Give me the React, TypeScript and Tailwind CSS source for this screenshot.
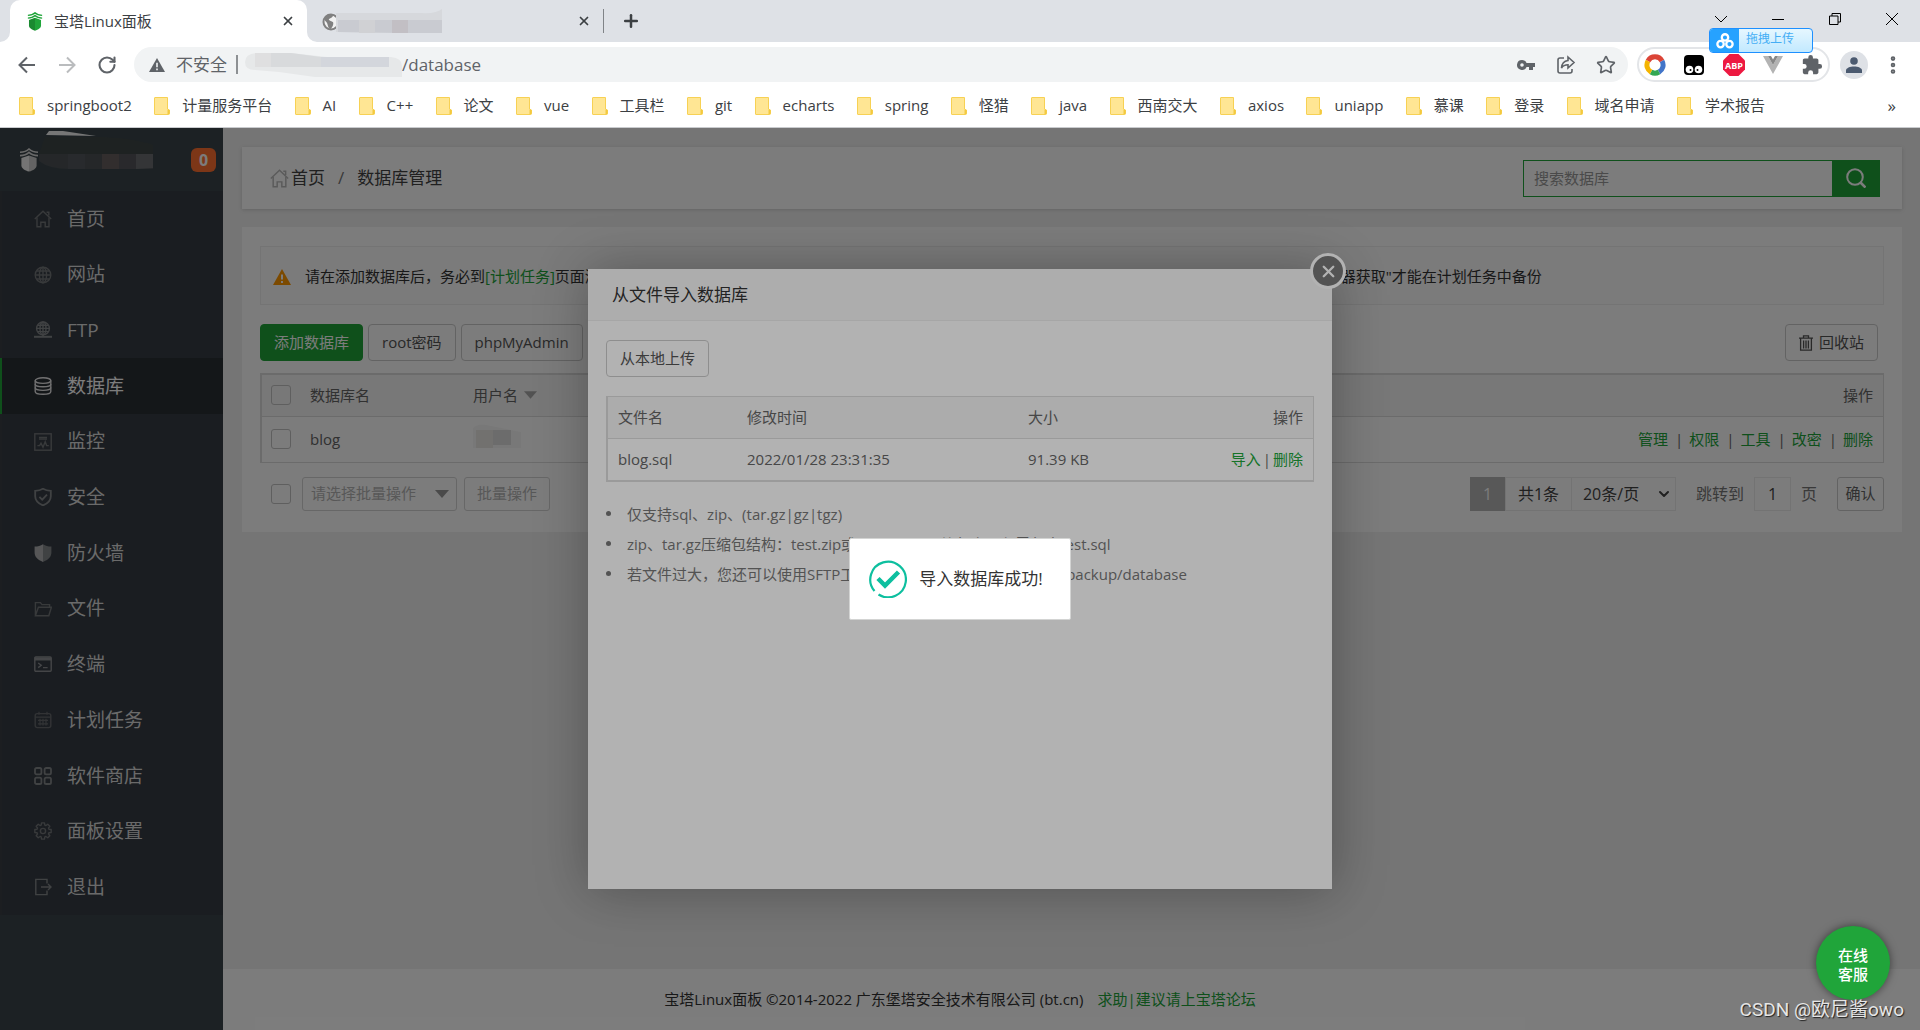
import { useState, type ReactNode } from "react";
import { ChevronDown, MoreVertical, Plus, RotateCw, Star, X } from "lucide-react";

const bookmarks = [
  "springboot2", "计量服务平台", "AI", "C++", "论文", "vue", "工具栏", "git", "echarts", "spring",
  "怪猎", "java", "西南交大", "axios", "uniapp", "慕课", "登录", "域名申请", "学术报告",
];

function Icon({ children, className = "h-[18px] w-[18px]" }: { children: ReactNode; className?: string }) {
  return (
    <svg viewBox="0 0 18 18" fill="none" stroke="currentColor" strokeWidth="1.4" className={className} aria-hidden="true">
      {children}
    </svg>
  );
}

const homeShape = (
  <>
    <path d="M.8 9 9 1.2 17.2 9" />
    <path d="M3 7.6v9.2h3.8v-4.6h4.4v4.6H15V7.6M12.6 2.2h2.2v3.4" />
  </>
);

const globeLines = (
  <>
    <ellipse cx="9" cy="9" rx="3.6" ry="7.8" />
    <path d="M9 1.2v15.6M1.2 9h15.6M2.4 5h13.2M2.4 13h13.2" />
  </>
);

// outline of a gear with eight teeth, centred in the 18x18 box
const gearPoints = Array.from({ length: 8 }, (_, i) => i * 45)
  .flatMap((a) => [[a - 17, 6.2], [a - 10, 8.3], [a + 10, 8.3], [a + 17, 6.2]])
  .map(([deg, r]) => {
    const rad = (deg * Math.PI) / 180;
    return `${(9 + r * Math.cos(rad)).toFixed(2)},${(9 + r * Math.sin(rad)).toFixed(2)}`;
  })
  .join(" ");

type MenuItem = { label: string; tone: string; icon: ReactNode };

const menu: MenuItem[] = [
  { label: "首页", tone: "text-[#74777a]", icon: homeShape },
  { label: "网站", tone: "text-[#74777a]", icon: <><circle cx="9" cy="9" r="7.8" />{globeLines}</> },
  {
    label: "FTP",
    tone: "text-[#85888b]",
    icon: (
      <>
        <circle cx="9" cy="7.4" r="6.4" />
        <ellipse cx="9" cy="7.4" rx="3" ry="6.4" />
        <path d="M9 1v15M2.6 7.4h12.8M3.6 4.2h10.8M3.6 10.6h10.8" />
        <path d="M0 15.8h18" strokeWidth="2" />
      </>
    ),
  },
  {
    label: "数据库",
    tone: "text-[#e8e8e8]",
    icon: (
      <>
        <ellipse cx="9" cy="3.6" rx="7.8" ry="2.8" />
        <path d="M1.2 3.6v10.8c0 1.6 3.4 2.8 7.8 2.8s7.8-1.2 7.8-2.8V3.6" />
        <path d="M1.2 7c0 1.6 3.4 2.8 7.8 2.8s7.8-1.2 7.8-2.8M1.2 10.6c0 1.6 3.4 2.8 7.8 2.8s7.8-1.2 7.8-2.8" />
      </>
    ),
  },
  {
    label: "监控",
    tone: "text-[#74777a]",
    icon: (
      <>
        <rect x=".8" y=".8" width="16.4" height="16.4" />
        <path d="M5 4.4h8M5 6h8M3.4 12.6h2.2l1.4-2.4 2 4 2.2-5.4 1.4 3.8h2.2" />
      </>
    ),
  },
  {
    label: "安全",
    tone: "text-[#85888b]",
    icon: (
      <>
        <path d="M9 .8c2.4 1.4 5 2 7.8 2v5.4c0 4.2-3 7.2-7.8 9.2-4.8-2-7.8-5-7.8-9.2V2.8c2.8 0 5.4-.6 7.8-2Z" strokeWidth="1.8" />
        <path d="m5.4 8.8 2.8 2.8 4.8-5" strokeWidth="1.8" />
      </>
    ),
  },
  {
    label: "防火墙",
    tone: "text-[#b0b2b4]",
    icon: (
      <>
        <path d="M9 .2C6.600 1.800 4 2.400.6 2.600v6c0 4.400 3.200 7.400 8.400 9.400Z" fill="currentColor" stroke="none" />
        <path d="M9 .2c2.400 1.600 5 2.200 8.400 2.400v6c0 4.400-3.200 7.400-8.400 9.400Z" fill="#85888b" stroke="none" />
      </>
    ),
  },
  {
    label: "文件",
    tone: "text-[#74777a]",
    icon: <path d="M1.4 15.8V2.6h5l1.6 2h7.6v2.6M1.4 15.8 4.4 7.2h13l-2.6 8.6H1.4Z" />,
  },
  {
    label: "终端",
    tone: "text-[#8d9093]",
    icon: (
      <>
        <rect x=".8" y="2" width="16.4" height="14.2" rx="1" />
        <path d="M.8 4h16.4" strokeWidth="3" />
        <path d="m4.2 8 3 2.2-3 2.4M9 12.6h4.6" />
      </>
    ),
  },
  {
    label: "计划任务",
    tone: "text-[#686b6e]",
    icon: (
      <>
        <rect x="1.2" y="2.6" width="15.6" height="14" rx="2" />
        <path d="M5 .8v3M13 .8v3M1.2 6.2h15.6M4 9.4h10M4 12.8h10M6 7.8v6.6M9 7.8v6.6M12 7.8v6.6" strokeWidth="1.2" />
      </>
    ),
  },
  {
    label: "软件商店",
    tone: "text-[#85888b]",
    icon: (
      <g strokeWidth="1.8">
        <rect x="1" y="1" width="6.4" height="6.4" rx="1.6" />
        <rect x="10.6" y="1" width="6.4" height="6.4" rx="1.6" />
        <rect x="1" y="10.6" width="6.4" height="6.4" rx="1.6" />
        <rect x="10.6" y="10.6" width="6.4" height="6.4" rx="1.6" />
      </g>
    ),
  },
  {
    label: "面板设置",
    tone: "text-[#74777a]",
    icon: (
      <>
        <polygon points={gearPoints} strokeLinejoin="round" />
        <circle cx="9" cy="9" r="2.6" />
      </>
    ),
  },
  {
    label: "退出",
    tone: "text-[#85888b]",
    icon: <path d="M13 5.4V1.4H1.800v15.200H13v-4M7 9h10M14 6l3 3-3 3" />,
  },
];

function PagodaLogo({ className, roof, left, right }: { className: string; roof: string; left: string; right: string }) {
  return (
    <svg viewBox="0 0 20 24" className={className} aria-hidden="true">
      <path d="M1 4.2C5 4.2 8 3 10 1c2 2 5 3.2 9 3.2M1 7.6c4 0 7-1.2 9-3.2 2 2 5 3.2 9 3.2" fill="none" stroke={roof} strokeWidth="1.6" />
      <path d="M10 7.4 2.4 10v7.4c0 2.6 3.4 5 7.6 6.2Z" fill={left} />
      <path d="m10 7.4 7.6 2.6v7.4c0 2.6-3.4 5-7.6 6.2Z" fill={right} />
    </svg>
  );
}

function FolderIcon() {
  return (
    <svg viewBox="0 0 16 18" className="h-[18px] w-4 shrink-0" aria-hidden="true">
      <path d="M1 .5h12.500v11.500l2 1v3.500a1 1 0 0 1-1 1H1a.5.5 0 0 1-.5-.5V1A.5.5 0 0 1 1 .5Z" fill="#ffe694" stroke="#f7d154" />
      <path d="M13.500 17.500v-5l2 .8v3.700Z" fill="#f3c93f" />
    </svg>
  );
}

function WindowButtons() {
  return (
    <div className="flex items-center gap-[45px] pb-1 pr-[22px] text-black">
      {[
        ["搜索标签页", "M0 3l6 6 6-6"],
        ["最小化", "M0 6.5h12"],
        ["还原", "M.5 3h8.500v8.500H.5zM3 3V.5h8.500V9H9"],
        ["关闭", "M0 0l12 12M12 0 0 12"],
      ].map(([label, d]) => (
        <button key={label} aria-label={label} type="button">
          <svg viewBox="0 0 12 12" className="h-3 w-3" fill="none" stroke="currentColor">
            <path d={d} />
          </svg>
        </button>
      ))}
    </div>
  );
}

function TabStrip() {
  return (
    <div className="flex h-[42px] bg-[#dee1e6] text-[15px] text-[#3c4043]">
      <div className="relative ml-[10px] flex w-[297px] items-center rounded-t-[10px] bg-white pl-4 pr-3">
        <svg viewBox="0 0 10 10" className="absolute -left-[10px] bottom-0 h-[10px] w-[10px]" aria-hidden="true">
          <path d="M10 0v10H0A10 10 0 0 0 10 0Z" fill="#fff" />
        </svg>
        <svg viewBox="0 0 10 10" className="absolute -right-[10px] bottom-0 h-[10px] w-[10px]" aria-hidden="true">
          <path d="M0 0v10h10A10 10 0 0 1 0 0Z" fill="#fff" />
        </svg>
        <PagodaLogo className="h-[19px] w-[18px]" roof="#20a53a" left="#1a8a30" right="#20a53a" />
        <span className="ml-[10px] flex-1">宝塔Linux面板</span>
        <button type="button" aria-label="关闭标签页"><X className="h-[14px] w-[14px]" strokeWidth={3} /></button>
      </div>
      <div className="flex w-[296px] items-center pl-[15px] pr-3">
        <svg viewBox="0 0 122 26" className="h-[26px] w-[122px]" aria-hidden="true">
          <circle cx="9" cy="14" r="7.500" fill="#f1f1f1" stroke="#808080" strokeWidth="2" />
          <path d="M3 10c3-4 6-4 8-3 0 3-3 3-4 4s2 2 4 3c1 3-1 5-2 7-3 0-3-4-4-6s-3-2-2-5Z" fill="#808080" />
          <path d="M14 5h85q15 1 21-4v24H80L14 24Z" fill="#d6d8dc" />
          <path d="M16 12h104v13H80L16 24Z" fill="#c9cbd1" />
          <path d="M70 12h16v13H70z" fill="#c2bfc4" />
          <path d="M37 12h16v13H37z" fill="#d0d1d4" />
        </svg>
        <button type="button" aria-label="关闭标签页" className="ml-auto"><X className="h-[14px] w-[14px]" strokeWidth={3} /></button>
      </div>
      <div className="my-auto h-6 w-px bg-[#808387]" />
      <button type="button" aria-label="新标签页" className="ml-[17px]"><Plus className="h-5 w-5" strokeWidth={3} /></button>
      <div className="ml-auto flex items-center"><WindowButtons /></div>
    </div>
  );
}

function Extensions() {
  return (
    <div className="flex h-[35px] w-[193px] items-center justify-between rounded-full border-2 border-[#e3e5e8] px-[5px]">
      <svg viewBox="0 0 22 22" className="h-[22px] w-[22px]" fill="none" strokeWidth="5" aria-hidden="true">
        <path d="M4 7a8 8 0 0 1 14 0" stroke="#db4437" />
        <path d="M18 7a8 8 0 0 1-3 11" stroke="#4275c9" />
        <path d="M15 18a8 8 0 0 1-8 0" stroke="#34a853" />
        <path d="M7 18A8 8 0 0 1 4 7" stroke="#f4b400" />
      </svg>
      <svg viewBox="0 0 20 20" className="h-5 w-5" aria-hidden="true">
        <rect width="20" height="20" rx="4" fill="#000" />
        <circle cx="5.500" cy="14.500" r="3.800" fill="#fff" />
        <circle cx="14.500" cy="14.500" r="3.800" fill="#fff" />
        <circle cx="6.500" cy="15" r="1" fill="#000" />
        <circle cx="13.500" cy="15" r="1" fill="#000" />
      </svg>
      <svg viewBox="0 0 22 22" className="h-[22px] w-[22px]" aria-hidden="true">
        <path d="M6.500 0h9L22 6.500v9L15.500 22h-9L0 15.500v-9Z" fill="#ed1941" />
        <text x="11" y="14.500" textAnchor="middle" fontSize="9" fontWeight="700" fill="#fff" className="font-['Open_Sans',sans-serif]">ABP</text>
      </svg>
      <svg viewBox="0 0 20 18" className="h-[18px] w-5" aria-hidden="true">
        <path d="M0 0h5l5 9 5-9h5L10 18Z" fill="#b3b3b3" />
        <path d="M5 0h3l2 3.500L12 0h3l-5 9Z" fill="#878787" />
      </svg>
      <svg viewBox="0 0 24 24" className="h-[22px] w-[22px]" fill="#5f6368" aria-hidden="true">
        <path d="M20.500 11H19V7c0-1.100-.9-2-2-2h-4V3.500a2.500 2.500 0 0 0-5 0V5H4c-1.100 0-2 .9-2 2v3.800h1.500a2.700 2.700 0 0 1 0 5.400H2V20c0 1.100.9 2 2 2h3.800v-1.500a2.700 2.700 0 0 1 5.400 0V22H17c1.100 0 2-.9 2-2v-4h1.500a2.500 2.500 0 0 0 0-5Z" />
      </svg>
    </div>
  );
}

function AddressBar() {
  const [path, setPath] = useState("/database");

  return (
    <div className="flex h-[45px] items-center bg-white pl-[17px] pr-4 text-[#5f6368]">
      <div className="flex w-[117px] items-center gap-5">
        <button type="button" aria-label="后退">
          <svg viewBox="0 0 20 20" className="h-5 w-5" fill="none" stroke="#5f6368" strokeWidth="2"><path d="M18 10H3M10 2.500 2.500 10l7.500 7.500" /></svg>
        </button>
        <button type="button" aria-label="前进">
          <svg viewBox="0 0 20 20" className="h-5 w-5" fill="none" stroke="#babcbe" strokeWidth="2"><path d="M2 10h15M10 2.500l7.500 7.500-7.500 7.500" /></svg>
        </button>
        <button type="button" aria-label="重新加载"><RotateCw className="h-5 w-5" strokeWidth={2.5} /></button>
      </div>
      <div className="flex h-[35px] flex-1 items-center rounded-full bg-[#f1f3f4] pl-[15px] pr-3 text-[17px]">
        <svg viewBox="0 0 16 14" className="h-[14px] w-4" aria-hidden="true">
          <path d="M8 0 16 14H0Z" fill="#5f6368" />
          <path d="M8 4.800v4.400M8 10.400v1.800" stroke="#f1f3f4" strokeWidth="1.600" />
        </svg>
        <span className="ml-[11px]">不安全</span>
        <span className="ml-[9px] h-[19px] w-[2px] bg-[#8d9093]" />
        <svg viewBox="0 0 157 26" className="ml-[7px] h-[26px] w-[157px]" aria-hidden="true">
          <path d="M12 1h34l36 4h64q11 1 11 9v11H70L34 20 10 18Q0 18 0 10T12 1Z" fill="#e6e8e9" />
          <path d="M10 1h36l30 4v10H10Z" fill="#d8dadc" />
          <path d="M76 5h68v10H76z" fill="#d3d6dc" />
          <path d="M10 1h16v14H10z" fill="#dfdfe0" />
        </svg>
        <input
          type="text"
          aria-label="地址"
          value={path}
          onChange={(e) => setPath(e.target.value)}
          className="min-w-0 flex-1 bg-transparent outline-none"
        />
        <div className="flex items-center gap-5">
          <button type="button" aria-label="密码">
            <svg viewBox="0 0 20 20" className="h-5 w-5" fill="#5f6368">
              <path fillRule="evenodd" d="M6 5a5 5 0 1 0 4.600 7H13v3h4v-3h2V8h-8.400A5 5 0 0 0 6 5Zm0 3.200a1.800 1.800 0 1 1 0 3.600 1.800 1.800 0 0 1 0-3.600Z" />
            </svg>
          </button>
          <button type="button" aria-label="分享">
            <svg viewBox="0 0 20 20" className="h-5 w-5" fill="none" stroke="#5f6368" strokeWidth="1.600">
              <path d="M8 3H4a2 2 0 0 0-2 2v11a2 2 0 0 0 2 2h10a2 2 0 0 0 2-2v-2" />
              <path d="M12 2l6 5.500-6 5.500v-3.200c-3 0-5 .8-6.500 3.200.3-4 2.500-7 6.500-7.500Z" />
            </svg>
          </button>
          <button type="button" aria-label="收藏"><Star className="h-5 w-5" strokeWidth={2} /></button>
        </div>
      </div>
      <div className="ml-[9px]"><Extensions /></div>
      <button type="button" aria-label="个人资料" className="ml-[10px] flex h-7 w-7 items-center justify-center rounded-full bg-[#dee1e6]">
        <svg viewBox="0 0 16 16" className="h-4 w-4" fill="#4b5a70">
          <circle cx="8" cy="4" r="3.800" />
          <path d="M0 16v-2.500C0 11 4 9.500 8 9.500s8 1.500 8 4V16Z" />
        </svg>
      </button>
      <button type="button" aria-label="更多" className="ml-[14px]"><MoreVertical className="h-[22px] w-[22px]" strokeWidth={3} /></button>
    </div>
  );
}

function Browser() {
  return (
    <header className="relative">
      <TabStrip />
      <AddressBar />
      <nav className="flex h-[41px] items-center justify-between border-b border-[#c9cbce] bg-white pb-[3px] pl-[19px] pr-6 text-[15px] text-[#3c4043]">
        <div className="flex max-w-[1746px] flex-1 items-center justify-between">
          {bookmarks.map((name) => (
            <a key={name} href="#" className="flex items-center gap-3 whitespace-nowrap">
              <FolderIcon />
              {name}
            </a>
          ))}
        </div>
        <button type="button" className="text-[17px]">»</button>
      </nav>
      {/* desktop upload widget floating over the window */}
      <div className="absolute right-[107px] top-7 flex h-[25px] w-[104px] overflow-hidden rounded border border-[#1e90ff] bg-linear-to-b from-[#e6f7ff] to-[#c2e9ff]">
        <div className="flex w-[29px] items-center justify-center bg-[#26a2ff]">
          <svg viewBox="0 0 20 18" className="h-4 w-[18px]" fill="none" stroke="#fff" strokeWidth="2.600" aria-hidden="true">
            <circle cx="10" cy="5" r="3.600" />
            <circle cx="5" cy="12.500" r="3.600" />
            <circle cx="15" cy="12.500" r="3.600" />
          </svg>
        </div>
        <span className="pl-[7px] text-xs leading-5 text-[#45aef5]">拖拽上传</span>
      </div>
    </header>
  );
}

function Sidebar() {
  return (
    <aside className="w-[223px] shrink-0 bg-[#3c464b]">
      <div className="flex h-[63px] items-center pl-[19px] pr-[7px]">
        <PagodaLogo className="h-6 w-5" roof="#d8d8d8" left="#efefef" right="#cfcfcf" />
        <svg viewBox="0 0 116 44" className="h-11 w-[116px] self-start" aria-hidden="true">
          <path d="M7 7 10 3h14l33 5Z" fill="#f4f4f4" />
          <path d="M6 9h52q36 1 56 8v9H0Z" fill="#3f4848" />
          <path d="M0 26h114v15h-4H30Q10 41 0 33Z" fill="#4c5257" />
          <path d="M29 26h17v15H29z" fill="#53585d" />
          <path d="M63 26h17v15H63z" fill="#67605f" />
          <path d="M80 26h17v15H80z" fill="#55565c" />
          <path d="M97 26h17v14l-17 1z" fill="#6c6f72" />
        </svg>
        <span className="ml-auto flex h-6 w-[25px] items-center justify-center rounded-md bg-[#ff7030] text-base font-bold text-white">0</span>
      </div>
      <nav className="grid h-[724px] auto-rows-fr bg-[#373d45] text-[19px]">
        {menu.map((item) => (
          <a
            key={item.label}
            href="#"
            className={
              item.label === "数据库"
                ? "flex items-center gap-[15px] border-l-2 border-[#20a53a] bg-[#2c3036] pl-8 text-white"
                : "flex items-center gap-[15px] border-l-2 border-[#3c4046] pl-8 text-[#dcdcdc]"
            }
          >
            <span className={item.tone}><Icon>{item.icon}</Icon></span>
            {item.label}
          </a>
        ))}
      </nav>
    </aside>
  );
}

function Button({ children, className = "" }: { children: ReactNode; className?: string }) {
  return (
    <button
      type="button"
      className={`flex h-[37px] items-center whitespace-nowrap rounded border px-[13px] ${className || "border-[#ccc] text-[#555]"}`}
    >
      {children}
    </button>
  );
}

function CheckBox({ label }: { label: string }) {
  return <input type="checkbox" aria-label={label} className="block h-5 w-5 shrink-0 appearance-none rounded-[3px] border border-[#c4c4c4]" />;
}

function Caret({ className }: { className: string }) {
  return (
    <svg viewBox="0 0 14 8" className={className} fill="currentColor" aria-hidden="true">
      <path d="M0 0h14L7 8Z" />
    </svg>
  );
}

function DatabaseTable() {
  return (
    <table className="mt-3 w-full border border-l-2 border-t-2 border-[#ddd] text-left text-[#666]">
      <thead className="bg-[#f6f6f6]">
        <tr className="h-[42px] border-b border-[#ddd]">
          <th className="w-[49px] pl-[9px]"><CheckBox label="全选" /></th>
          <th className="w-[163px] font-normal">数据库名</th>
          <th className="font-normal">
            <span className="flex items-center gap-[6px]">用户名<Caret className="h-2 w-[13px] text-[#aaa]" /></span>
          </th>
          <th className="pr-[10px] text-right font-normal">操作</th>
        </tr>
      </thead>
      <tbody>
        <tr className="h-[46px]">
          <td className="pl-[9px]"><CheckBox label="选择 blog" /></td>
          <td>blog</td>
          <td>
            <svg viewBox="0 0 68 30" className="h-[30px] w-[68px]" aria-hidden="true">
              <path d="M0 4Q6-2 18 2l30 6v16H0Z" fill="#f8f8f8" />
              <path d="M3 6h17v18H3z" fill="#ebeae6" />
              <path d="M20 6h18v15H20z" fill="#dfdfdf" />
            </svg>
          </td>
          <td className="pr-[10px] text-right">
            {["管理", "权限", "工具", "改密", "删除"].map((action, i) => (
              <span key={action}>
                {i > 0 && <span className="ml-[7px] mr-[6px]">|</span>}
                <a href="#" className="text-[#20a53a]">{action}</a>
              </span>
            ))}
          </td>
        </tr>
      </tbody>
    </table>
  );
}

function Pager() {
  return (
    <div className="flex h-[34px] items-center text-base text-[#444]">
      <span className="flex h-full w-[35px] items-center justify-center bg-[#b5b5b5] text-white">1</span>
      <span className="flex h-full w-[67px] items-center justify-center border border-[#ececec]">共1条</span>
      <div className="relative h-full">
        <select aria-label="每页条数" className="h-full w-[104px] appearance-none border border-l-0 border-[#ececec] pl-[11px]">
          <option>20条/页</option>
        </select>
        <ChevronDown className="absolute right-1 top-[9px] h-4 w-4" strokeWidth={3} />
      </div>
      <label htmlFor="page" className="ml-5 text-[#777]">跳转到</label>
      <input id="page" defaultValue="1" className="mx-[10px] h-full w-[37px] border border-[#ececec] text-center" />
      <span className="text-[#777]">页</span>
      <button type="button" className="ml-5 h-full w-[47px] rounded-[3px] border border-[#ccc] text-[15px] text-[#666]">确认</button>
    </div>
  );
}

function DatabasePage() {
  return (
    <main className="flex min-w-0 flex-1 flex-col bg-[#f1f1f1] text-[15px]">
      <div className="pb-10 pl-[19px] pr-[18px] pt-[19px]">
        <div className="flex h-[62px] items-center bg-white pl-7 pr-[22px] shadow-[0_1px_4px_rgba(0,0,0,0.15)]">
          <nav className="flex items-center text-[17px] text-[#444]">
            <Icon className="mr-[2px] h-[19px] w-[19px] text-[#bbb]">{homeShape}</Icon>
            <a href="#">首页</a>
            <span className="mx-[13px] text-[#777]">/</span>
            <span>数据库管理</span>
          </nav>
          <form className="ml-auto flex h-[37px]">
            <input
              type="text"
              aria-label="搜索数据库"
              placeholder="搜索数据库"
              className="w-[309px] border border-r-0 border-[#20a53a] px-[10px] outline-none placeholder:text-[#999]"
            />
            <button type="button" aria-label="搜索" className="flex w-12 items-center justify-center bg-[#20a53a] text-white">
              <svg viewBox="0 0 20 20" className="h-5 w-5" fill="none" stroke="currentColor" strokeWidth="2">
                <circle cx="9" cy="9" r="7.800" />
                <path d="m14.500 14.500 5 5" strokeWidth="2.600" />
              </svg>
            </button>
          </form>
        </div>

        <section className="mt-[18px] bg-white px-[18px] pb-[21px] pt-[19px]">
          <div className="flex h-[59px] items-center overflow-hidden whitespace-nowrap border border-[#eee] bg-[#fcfcfc] px-3 pt-[2px] text-[#333]">
            <svg viewBox="0 0 18 16" className="mr-[14px] h-4 w-[18px] shrink-0" aria-hidden="true">
              <path d="M9 0 18 16H0Z" fill="#ff9900" />
              <path d="M9 5.500v5M9 12v2" stroke="#fff" strokeWidth="2" />
            </svg>
            <p>
              请在添加数据库后，务必到<a href="#" className="text-[#20a53a]">[计划任务]</a>
              页面添加定时备份任务，以保证您的数据安全。注意：若某一个数据库不是在当前面板上创建的，则需要先点击"从服务器获取"才能在计划任务中备份
            </p>
          </div>

          <div className="mt-[19px] flex gap-[5px] pr-[6px]">
            <Button className="border-[#20a53a] bg-[#20a53a] text-white">添加数据库</Button>
            <Button>root密码</Button>
            <Button>phpMyAdmin</Button>
            <Button className="ml-auto gap-[6px] border-[#ccc] text-[#555]">
              <svg viewBox="0 0 14 16" className="h-4 w-[14px]" fill="none" stroke="currentColor" strokeWidth="1.300" aria-hidden="true">
                <path d="M0 3.200h14M4.500 3V.8h5V3M1.600 3.200v12h10.800v-12M4.600 5.500v8M7 5.500v8M9.400 5.500v8" />
              </svg>
              回收站
            </Button>
          </div>

          <DatabaseTable />

          <div className="mt-[14px] flex items-center pl-[11px]">
            <CheckBox label="全部选择" />
            <div className="relative ml-[11px] text-[#b5b5b5]">
              <select aria-label="批量操作" className="block h-[34px] w-[155px] appearance-none rounded-[3px] border border-[#d5d5d5] pl-2">
                <option>请选择批量操作</option>
              </select>
              <Caret className="absolute right-2 top-[13px] h-2 w-[14px] text-[#999]" />
            </div>
            <button type="button" className="ml-[7px] h-[34px] w-[86px] rounded-[3px] border border-[#d5d5d5] text-[#b5b5b5]">批量操作</button>
            <div className="ml-auto"><Pager /></div>
          </div>
        </section>
      </div>

      <footer className="mt-auto flex h-[61px] items-center justify-center gap-[14px] bg-white pr-[223px] text-[#333]">
        <span>宝塔Linux面板 ©2014-2022 广东堡塔安全技术有限公司 (bt.cn)</span>
        <a href="#" className="text-[#20a53a]">求助|建议请上宝塔论坛</a>
      </footer>
    </main>
  );
}

const importTips = [
  "仅支持sql、zip、(tar.gz|gz|tgz)",
  "zip、tar.gz压缩包结构：test.zip或test.tar.gz压缩包内，必需包含test.sql",
  "若文件过大，您还可以使用SFTP工具，将数据库文件上传到/www/backup/database",
];

function ImportDialog() {
  return (
    <div role="dialog" aria-labelledby="import-title" className="relative h-[620px] w-[744px] bg-white text-[15px] text-[#666] shadow-[1px_1px_50px_rgba(0,0,0,0.3)]">
      <h2 id="import-title" className="flex h-[52px] items-center border-b border-[#eee] bg-[#f8f8f8] pl-6 text-[17px] text-[#333]">
        从文件导入数据库
      </h2>
      <button type="button" aria-label="关闭" className="absolute -right-[14px] -top-4 flex h-9 w-9 items-center justify-center rounded-full border-[3px] border-white bg-[#777] text-white">
        <X className="h-[19px] w-[19px]" strokeWidth={3} />
      </button>
      <div className="px-[18px] pt-[19px]">
        <Button>从本地上传</Button>
        <table className="mt-[19px] w-full border border-b-2 border-l-2 border-[#ddd] text-left">
          <thead className="bg-[#f6f6f6]">
            <tr className="h-[42px] border-b border-[#ddd]">
              <th className="w-[140px] pl-[10px] font-normal">文件名</th>
              <th className="w-[281px] font-normal">修改时间</th>
              <th className="font-normal">大小</th>
              <th className="pr-[10px] text-right font-normal">操作</th>
            </tr>
          </thead>
          <tbody>
            <tr className="h-[42px]">
              <td className="pl-[10px]">blog.sql</td>
              <td>2022/01/28 23:31:35</td>
              <td>91.39 KB</td>
              <td className="pr-[10px] text-right">
                <a href="#" className="text-[#20a53a]">导入</a>
                <span className="mx-[2px]">|</span>
                <a href="#" className="text-[#20a53a]">删除</a>
              </td>
            </tr>
          </tbody>
        </table>
        <ul className="mt-[17px] leading-[30px] text-[#777]">
          {importTips.map((tip) => (
            <li key={tip} className="flex items-center gap-4 before:h-[5px] before:w-[5px] before:rounded-full before:bg-current">
              {tip}
            </li>
          ))}
        </ul>
      </div>
    </div>
  );
}

function Toast() {
  return (
    <div role="status" className="flex h-[82px] items-center gap-3 rounded-[2px] border border-[#d3d4d3] bg-white pl-[19px] pr-[27px] text-[17px] text-[#333]">
      <svg viewBox="0 0 38 38" className="h-[38px] w-[38px]" fill="none" stroke="#0dbf9f" aria-hidden="true">
        <path d="M9.500 34.500a17.800 17.800 0 1 0-4-3.500" strokeWidth="2.200" />
        <path d="m9 18.500 7 7L29.500 12" strokeWidth="4.500" />
      </svg>
      导入数据库成功!
    </div>
  );
}

export default function App() {
  return (
    <div className="flex min-h-screen flex-col font-['Open_Sans','Noto_Sans_CJK_SC',sans-serif]">
      <Browser />
      <div className="relative flex flex-1">
        <Sidebar />
        <DatabasePage />
        <div className="absolute inset-0 flex items-center justify-center bg-black/30">
          <ImportDialog />
        </div>
        <div className="absolute inset-0 flex items-center justify-center bg-black/30">
          <Toast />
        </div>
        <button type="button" className="absolute bottom-[30px] right-[30px] h-[74px] w-[74px] rounded-full bg-[#20a53a] pt-[3px] text-[15px] font-medium leading-[19px] text-white shadow-[0_0_8px_rgba(0,0,0,0.5)]">
          在线<br />客服
        </button>
        <span className="absolute bottom-2 right-4 font-['Roboto','Noto_Sans_CJK_SC',sans-serif] text-[19px] leading-6 text-[#e6e6e6] [text-shadow:1px_1px_1px_#222]">
          CSDN @欧尼酱owo
        </span>
      </div>
    </div>
  );
}
